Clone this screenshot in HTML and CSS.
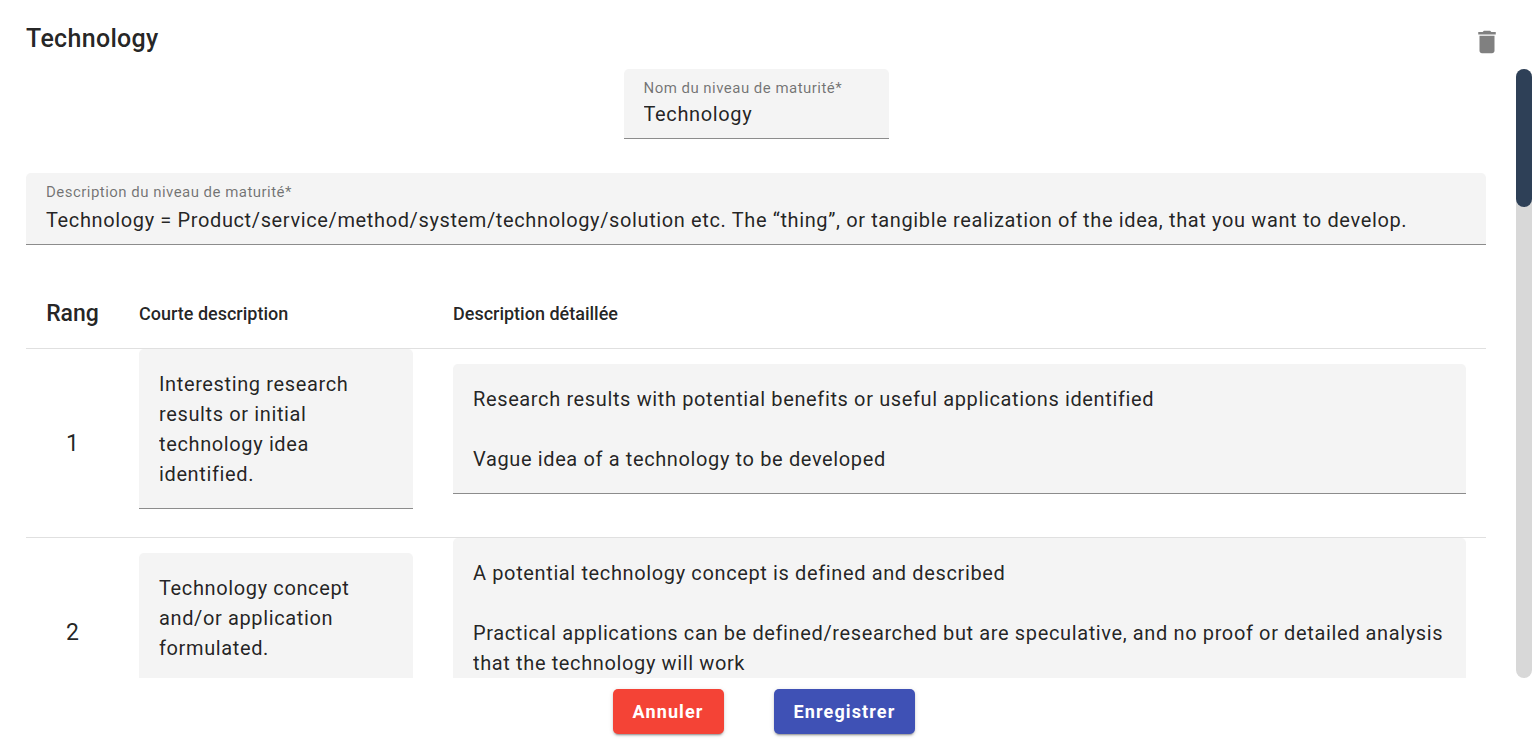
FILE: index.html
```html
<!DOCTYPE html>
<html lang="fr">
<head>
<meta charset="utf-8">
<title>Technology</title>
<link rel="stylesheet" href="styles.css">
</head>
<body>
<form class="dialog">
  <header class="dialog-header">
    <h1 class="dialog-title">Technology</h1>
    <button class="icon-button" type="button" aria-label="Supprimer">
      <svg class="icon" viewBox="0 0 24 24" aria-hidden="true"><path d="M6 19c0 1.100.9 2 2 2h8c1.100 0 2-.9 2-2V7H6v12zM19 4h-3.500l-1-1h-5l-1 1H5v2h14V4z"/></svg>
    </button>
  </header>

  <div class="dialog-body">
    <div class="content">
      <div class="field field-name">
        <label class="field-label" for="name">Nom du niveau de maturité*</label>
        <input class="field-control" id="name" type="text" value="Technology" required>
      </div>
      <div class="field field-description">
        <label class="field-label" for="description">Description du niveau de maturité*</label>
        <textarea class="field-control" id="description" rows="1" required>Technology = Product/service/method/system/technology/solution etc. The “thing”, or tangible realization of the idea, that you want to develop.</textarea>
      </div>

      <table class="levels">
        <thead>
          <tr>
            <th class="col-rank" scope="col">Rang</th>
            <th class="col-short" scope="col" id="short">Courte description</th>
            <th class="col-detail" scope="col" id="detail">Description détaillée</th>
          </tr>
        </thead>
        <tbody>
          <tr>
            <td class="col-rank" id="rank-1">1</td>
            <td><div class="field"><textarea class="field-control" rows="4" aria-labelledby="short rank-1">Interesting research results or initial technology idea identified.</textarea></div></td>
            <td><div class="field"><textarea class="field-control" rows="3" aria-labelledby="detail rank-1">Research results with potential benefits or useful applications identified

Vague idea of a technology to be developed</textarea></div></td>
          </tr>
          <tr>
            <td class="col-rank" id="rank-2">2</td>
            <td><div class="field"><textarea class="field-control" rows="3" aria-labelledby="short rank-2">Technology concept and/or application formulated.</textarea></div></td>
            <td><div class="field"><textarea class="field-control" rows="4" aria-labelledby="detail rank-2">A potential technology concept is defined and described

Practical applications can be defined/researched but are speculative, and no proof or detailed analysis that the technology will work</textarea></div></td>
          </tr>
        </tbody>
      </table>
    </div>
    <div class="scroll-track" aria-hidden="true"><div class="scroll-thumb"></div></div>
  </div>

  <footer class="dialog-actions">
    <button class="button button-warn" type="button">Annuler</button>
    <button class="button button-primary" type="submit">Enregistrer</button>
  </footer>
</form>
</body>
</html>
```
FILE: styles.css
```css
* {
  box-sizing: border-box;
}

body {
  margin: 0;
  background: #fff;
  color: rgba(0, 0, 0, 0.87);
  font-family: Roboto, "Liberation Sans", sans-serif;
  font-size: 20px;
  line-height: 30px;
}

.dialog {
  display: flex;
  flex-direction: column;
  height: 100vh;
}

.dialog-header {
  display: flex;
  align-items: flex-start;
  justify-content: space-between;
  padding: 20px 30px 12px 26px;
}

.dialog-title {
  margin: 0;
  font-size: 25px;
  font-weight: 500;
  line-height: 37px;
  letter-spacing: 0.0125em;
}

.icon-button {
  display: flex;
  margin: 7px 0 0;
  padding: 0;
  border: 0;
  background: none;
  color: #808080;
  cursor: pointer;
}

.icon {
  width: 30px;
  height: 30px;
  fill: currentColor;
}

.dialog-body {
  display: flex;
  flex: 1;
  gap: 30px;
  min-height: 0;
}

.content {
  flex: 1;
  overflow-y: auto;
  padding-left: 26px;
  scrollbar-width: none;
}

.scroll-track {
  width: 16px;
  border-radius: 8px;
  background: #d8d8d8;
}

.scroll-thumb {
  height: 138px;
  border-radius: 8px;
  background: #2e4057;
}

.field {
  display: flex;
  flex-direction: column;
  padding: 20px 20px 19px;
  border-bottom: 1px solid #8c8c8c;
  border-radius: 5px 5px 0 0;
  background: #f4f4f4;
}

.field-label {
  color: rgba(0, 0, 0, 0.54);
  font-size: 15px;
  line-height: 22px;
  letter-spacing: 0.03125em;
}

.field-control {
  width: 100%;
  margin: 0;
  padding: 0;
  border: 0;
  outline: 0;
  background: none;
  color: inherit;
  font: inherit;
  letter-spacing: 0.03125em;
  overflow: hidden;
  resize: none;
}

.field-name {
  width: 265px;
  margin: 0 auto 34px;
  padding-top: 8px;
  padding-bottom: 9px;
}

.field-description {
  margin-bottom: 34px;
  padding-top: 8px;
  padding-bottom: 9px;
}

.field-description .field-label {
  padding-bottom: 2px;
}

.levels {
  width: 100%;
  border-collapse: separate;
  border-spacing: 0;
  table-layout: fixed;
}

.levels th,
.levels td {
  padding: 0 20px;
  border-bottom: 1px solid #e0e0e0;
}

.levels th {
  height: 70px;
  font-size: 18px;
  font-weight: 500;
  text-align: left;
}

.levels td {
  padding-bottom: 28px;
}

.levels .col-rank {
  width: 93px;
  padding: 0;
  font-size: 23px;
  text-align: center;
}

.levels td.col-rank {
  padding-top: 2px;
}

.levels .col-short {
  width: 314px;
}

.dialog-actions {
  display: flex;
  justify-content: center;
  gap: 50px;
  padding: 11px 4px 8px 0;
}

.button {
  height: 45px;
  padding: 0 20px;
  border: 0;
  border-radius: 5px;
  box-shadow: 0 3px 1px -2px rgba(0, 0, 0, 0.2), 0 2px 2px rgba(0, 0, 0, 0.14), 0 1px 5px rgba(0, 0, 0, 0.12);
  color: #fff;
  font: inherit;
  font-size: 18px;
  font-weight: 700;
  letter-spacing: 0.0625em;
  cursor: pointer;
}

.button-warn {
  background: #f44336;
}

.button-primary {
  background: #3f51b5;
}
```
